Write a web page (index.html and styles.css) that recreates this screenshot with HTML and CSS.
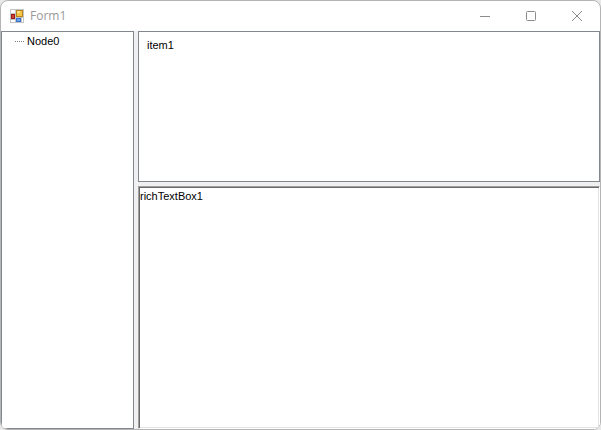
FILE: index.html
```html
<!DOCTYPE html>
<html lang="en">
<head>
  <meta charset="UTF-8" />
  <meta name="viewport" content="width=device-width, initial-scale=1.0"/>
  <title>Form1</title>
  <link rel="stylesheet" href="styles.css">
</head>
<body>
  <div class="window">
    <header class="title-bar">
      <svg class="app-icon" width="14" height="14" viewBox="0 0 14 14" shape-rendering="crispEdges">
        <rect width="14" height="14" fill="#c4c4c4"/>
        <path d="M1 1h4v3H1zM1 11h4v2H1zM12 9h1v4h-1z" fill="#fff"/>
        <rect x="6" y="1" width="7" height="7" fill="#b9841c"/>
        <rect x="7" y="2" width="5" height="5" fill="#f8c544"/>
        <rect x="7" y="2" width="3" height="2" fill="#ffe08a"/>
        <rect x="1" y="5" width="4" height="5" fill="#9c1c14"/>
        <rect x="2" y="6" width="2" height="3" fill="#c8443a"/>
        <rect x="6" y="9" width="5" height="4" fill="#3a6fd0"/>
        <rect x="7" y="10" width="3" height="2" fill="#6fa3ee"/>
      </svg>
      <h1 class="title">Form1</h1>
      <div class="caption-buttons">
        <button type="button" aria-label="Minimize">
          <svg width="12" height="12" viewBox="0 0 12 12"><path d="M1 6.5h10"/></svg>
        </button>
        <button type="button" aria-label="Maximize">
          <svg width="12" height="12" viewBox="0 0 12 12"><rect x="1.5" y="1.5" width="9" height="9" rx="1"/></svg>
        </button>
        <button type="button" aria-label="Close">
          <svg width="12" height="12" viewBox="0 0 12 12"><path d="M1 1l10 10M11 1L1 11"/></svg>
        </button>
      </div>
    </header>

    <main class="content">
      <ul class="tree" role="tree">
        <li class="node" role="treeitem">Node0</li>
      </ul>
      <div class="side">
        <ul class="list">
          <li>item1</li>
        </ul>
        <textarea class="rich-text" aria-label="Rich text" spellcheck="false">richTextBox1</textarea>
      </div>
    </main>
  </div>
</body>
</html>
```
FILE: styles.css
```css
:root {
  --frame: #b4b4b4;
  --border: #828790;
  --face: #f0f0f0;
  --muted: #999;
}

* {
  box-sizing: border-box;
}

body {
  margin: 0;
  background: #e8e8e8;
  font-family: "Liberation Sans", Arial, sans-serif;
  font-size: 11px;
  line-height: 14px;
  color: #000;
}

.window {
  display: flex;
  flex-direction: column;
  height: 100vh;
  border: 1px solid var(--frame);
  border-radius: 8px;
  background: #fff;
  overflow: hidden;
}

.title-bar {
  display: flex;
  align-items: center;
  flex: none;
  height: 30px;
  padding-left: 9px;
}

.title {
  margin: 0 0 0 6px;
  font-family: "Open Sans", "Segoe UI", sans-serif;
  font-size: 12px;
  font-weight: normal;
  color: var(--muted);
}

.caption-buttons {
  display: flex;
  height: 100%;
  margin-left: auto;
}

.caption-buttons button {
  display: flex;
  align-items: center;
  justify-content: center;
  width: 46px;
  padding: 0;
  border: none;
  background: none;
}

.caption-buttons button:hover {
  background: #e9e9e9;
}

.caption-buttons svg {
  fill: none;
  stroke: #8c8c8c;
}

.content {
  display: grid;
  grid-template-columns: 133px 1fr;
  gap: 4px;
  flex: 1;
  min-height: 0;
  background: var(--face);
}

.tree,
.list {
  margin: 0;
  border: 1px solid var(--border);
  background: #fff;
  list-style: none;
}

.tree {
  padding: 2px 0 0 13px;
}

.node {
  display: flex;
  align-items: center;
  gap: 3px;
}

/* dotted connector in front of the node */
.node::before {
  content: "";
  width: 9px;
  height: 1px;
  background: repeating-linear-gradient(to right, #808080 0 1px, #fff 1px 2px);
}

.side {
  display: grid;
  grid-template-rows: 23fr 37fr;
  gap: 4px;
  min-height: 0;
}

.list {
  padding: 6px 8px;
}

/* sunken 3D edge: outer line is the border, inner line is the shadow */
.rich-text {
  width: 100%;
  height: 100%;
  padding: 2px 1px;
  border: 1px solid;
  border-color: #a0a0a0 #fff #fff #a0a0a0;
  box-shadow: inset 1px 1px #696969, inset -1px -1px #e3e3e3;
  outline: none;
  resize: none;
  background: #fff;
  color: inherit;
  font: inherit;
}
```
